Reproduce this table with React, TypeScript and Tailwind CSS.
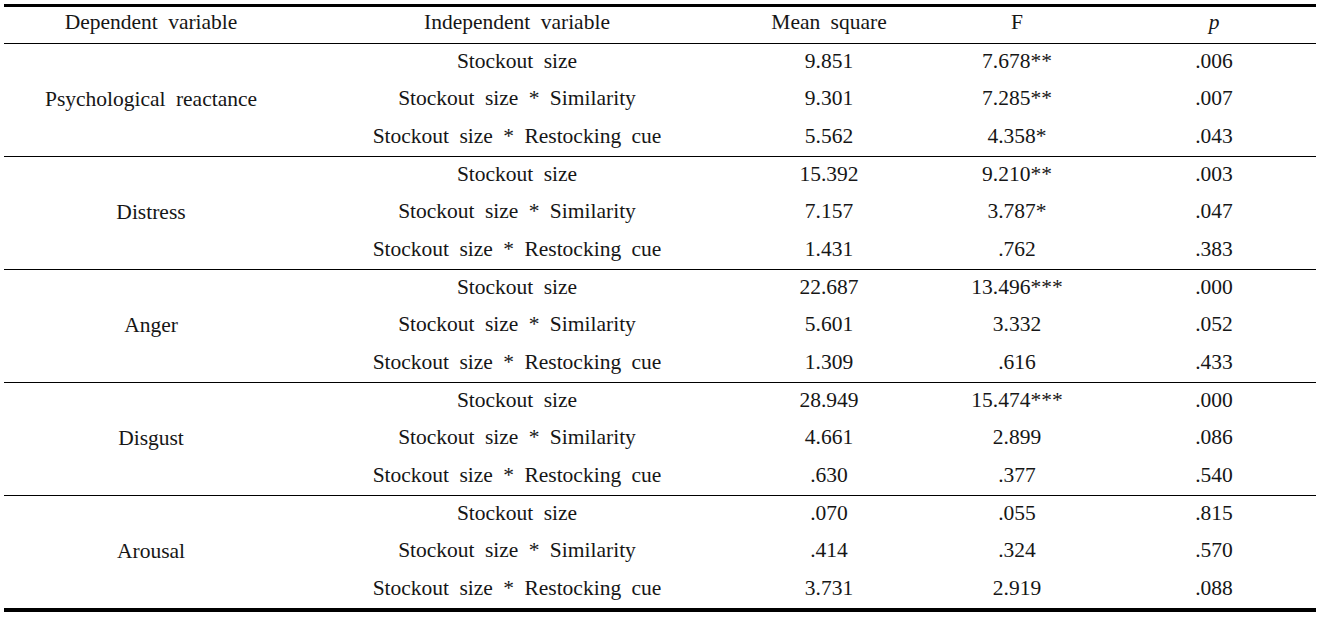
import React from 'react';

type Effect = { iv: string; ms: string; f: string; p: string };
type Group = { dv: string; rows: Effect[] };

const IV1 = 'Stockout size';
const IV2 = 'Stockout size * Similarity';
const IV3 = 'Stockout size * Restocking cue';

const groups: Group[] = [
  {
    dv: 'Psychological reactance',
    rows: [
      { iv: IV1, ms: '9.851', f: '7.678**', p: '.006' },
      { iv: IV2, ms: '9.301', f: '7.285**', p: '.007' },
      { iv: IV3, ms: '5.562', f: '4.358*', p: '.043' },
    ],
  },
  {
    dv: 'Distress',
    rows: [
      { iv: IV1, ms: '15.392', f: '9.210**', p: '.003' },
      { iv: IV2, ms: '7.157', f: '3.787*', p: '.047' },
      { iv: IV3, ms: '1.431', f: '.762', p: '.383' },
    ],
  },
  {
    dv: 'Anger',
    rows: [
      { iv: IV1, ms: '22.687', f: '13.496***', p: '.000' },
      { iv: IV2, ms: '5.601', f: '3.332', p: '.052' },
      { iv: IV3, ms: '1.309', f: '.616', p: '.433' },
    ],
  },
  {
    dv: 'Disgust',
    rows: [
      { iv: IV1, ms: '28.949', f: '15.474***', p: '.000' },
      { iv: IV2, ms: '4.661', f: '2.899', p: '.086' },
      { iv: IV3, ms: '.630', f: '.377', p: '.540' },
    ],
  },
  {
    dv: 'Arousal',
    rows: [
      { iv: IV1, ms: '.070', f: '.055', p: '.815' },
      { iv: IV2, ms: '.414', f: '.324', p: '.570' },
      { iv: IV3, ms: '3.731', f: '2.919', p: '.088' },
    ],
  },
];

const cols = 'grid grid-cols-[294px_438px_186px_190px_204px]';
const head = 'flex items-center justify-center pb-[4px] whitespace-nowrap';
const cell = 'flex items-center justify-center pb-[2px] whitespace-nowrap';

export default function App() {
  return (
    <div className="min-h-screen bg-white pt-[4px] pl-[4px]">
      <div
        className="w-[1312px] border-t-[3px] border-b-[4px] border-black text-[21.5px] leading-none text-[#161616] [word-spacing:5px]"
        style={{ fontFamily: '"Liberation Serif", "Times New Roman", serif' }}
      >
        {/* header */}
        <div className={`${cols} h-[37px] border-b border-black`}>
          <div className={head}>Dependent variable</div>
          <div className={head}>Independent variable</div>
          <div className={head}>Mean square</div>
          <div className={head}>F</div>
          <div className={`${head} italic`}>p</div>
        </div>

        {groups.map((g, gi) => (
          <div
            key={g.dv}
            className={`${cols} grid-rows-[37px_38px_37px] ${gi < groups.length - 1 ? 'border-b border-black' : ''}`}
          >
            <div className="row-span-3 flex items-center justify-center whitespace-nowrap">{g.dv}</div>
            {g.rows.map((r) => (
              <React.Fragment key={r.iv}>
                <div className={`${cell} col-start-2`}>{r.iv}</div>
                <div className={cell}>{r.ms}</div>
                <div className={cell}>{r.f}</div>
                <div className={cell}>{r.p}</div>
              </React.Fragment>
            ))}
          </div>
        ))}
      </div>
    </div>
  );
}
